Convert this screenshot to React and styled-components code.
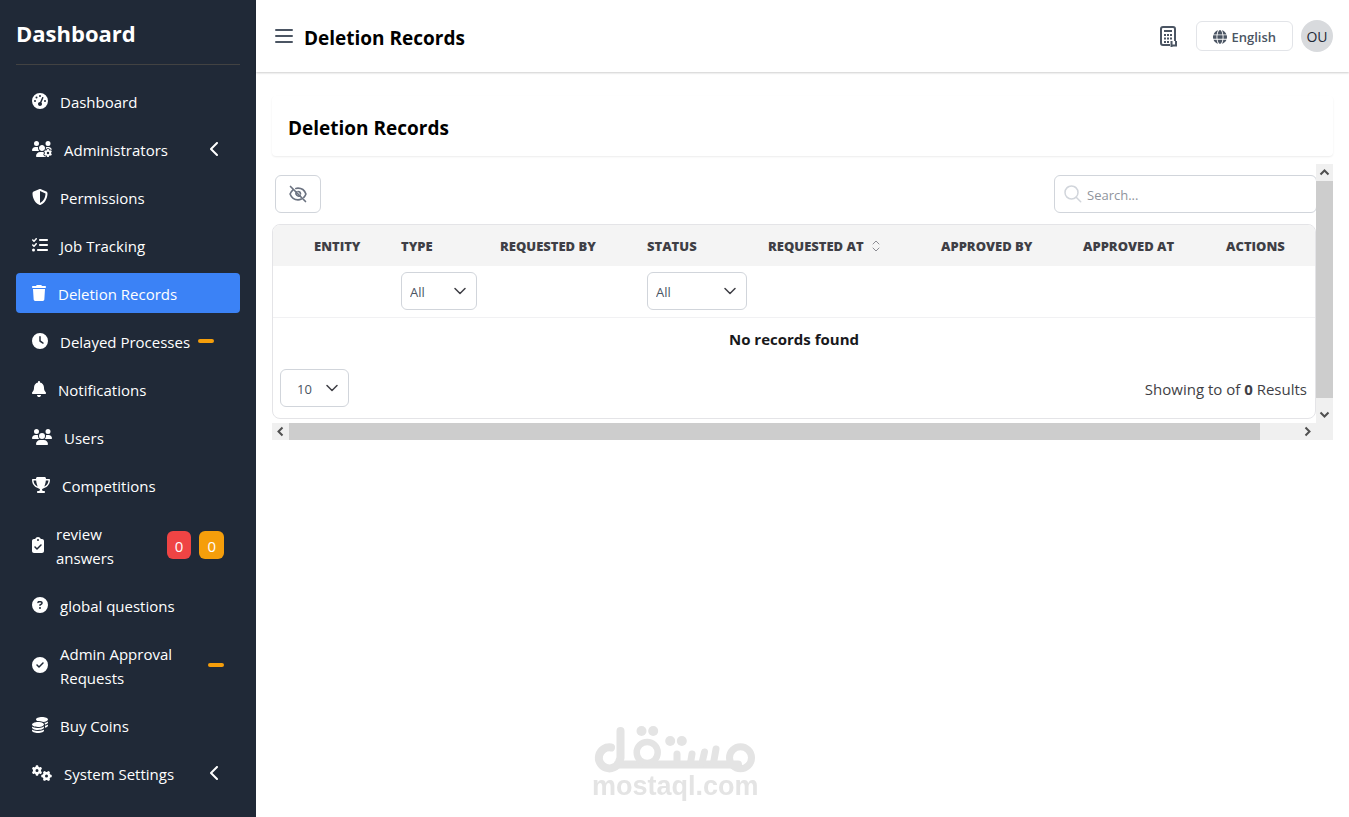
import React from 'react';
import styled, { createGlobalStyle } from 'styled-components';
import {
  FaGaugeHigh, FaUsersGear, FaShieldHalved, FaListCheck, FaTrash, FaClock, FaBell, FaUsers,
  FaTrophy, FaClipboardCheck, FaCircleQuestion, FaCircleCheck, FaCoins, FaGears,
  FaChevronLeft, FaGlobe,
} from 'react-icons/fa6';

const GlobalStyle = createGlobalStyle`
  *, *::before, *::after { box-sizing: border-box; }
  body {
    margin: 0;
    background: #fff;
    color: #1f2937;
    font-family: "Segoe UI", "Open Sans", "Noto Sans", sans-serif;
    font-size: 15px;
    line-height: 24px;
  }
  h1, h2, p { margin: 0; }
  button, select, input { font-family: inherit; }
`;

const Page = styled.div`
  display: flex;
  min-height: 100vh;
`;

const Sidebar = styled.aside`
  flex: 0 0 256px;
  padding: 16px 16px 24px;
  background: #202937;
  color: #fff;
`;

const Brand = styled.h1`
  height: 49px;
  border-bottom: 1px solid #424242;
  font-size: 22px;
  line-height: 34px;
`;

const Menu = styled.ul`
  display: flex;
  flex-direction: column;
  gap: 8px;
  margin: 16px 0 0;
  padding: 0;
  list-style: none;
`;

const MenuLink = styled.a`
  display: flex;
  align-items: center;
  min-height: 40px;
  padding: 7px 16px;
  border-radius: 4px;
  background: ${(p) => (p.$active ? '#3b82f6' : 'transparent')};
  color: #fff;
  text-decoration: none;

  > svg {
    flex: none;
    width: ${(p) => p.$iconWidth}px;
    height: 16px;
  }
`;

const MenuLabel = styled.span`
  margin-left: 12px;
  padding-top: 2px;
  flex: ${(p) => (p.$wrapAt ? '1 1 0' : 'none')};
  max-width: ${(p) => (p.$wrapAt ? `${p.$wrapAt}px` : 'none')};
`;

const Arrow = styled.span`
  display: flex;
  margin: 0 4px 0 auto;
  svg { width: 10px; height: 16px; }
`;

const Badges = styled.span`
  display: flex;
  gap: 8px;
  margin-left: ${(p) => (p.$inline ? '8px' : 'auto')};
`;

const Badge = styled.span`
  min-width: ${(p) => (p.$empty ? '16px' : '24px')};
  padding: ${(p) => (p.$empty ? '2px 8px' : '3px 8px 1px')};
  border-radius: ${(p) => (p.$empty ? '2px' : '6px')};
  background: ${(p) => p.$color};
`;

const Main = styled.main`
  flex: 1;
  min-width: 0;
`;

const TopBar = styled.header`
  display: flex;
  align-items: center;
  height: 72px;
  padding: 0 16px;
  box-shadow: 0 1px 2px rgba(0, 0, 0, 0.2);
`;

const IconButton = styled.button`
  display: flex;
  padding: 0;
  border: 0;
  background: none;
  color: #4b5563;
`;

const Heading = styled.h2`
  color: #000;
  font-size: 19px;
  line-height: 28px;
`;

const TopTitle = styled(Heading)`
  flex: 1;
  margin-left: 8px;
  padding-top: 4px;
`;

const Tools = styled.div`
  display: flex;
  align-items: center;
  gap: 8px;
`;

const LanguageButton = styled.button`
  display: flex;
  align-items: center;
  gap: 4px;
  height: 30px;
  margin-left: 8px;
  padding: 2px 16px 0;
  border: 1px solid #e2e4e8;
  border-radius: 6px;
  background: #fff;
  color: #4b5563;
  font-size: 13px;
  font-weight: 600;
  line-height: 20px;
`;

const Avatar = styled.button`
  width: 32px;
  height: 32px;
  padding: 0;
  border: 0;
  border-radius: 50%;
  background: #d8dadd;
  color: #1f2937;
  font-size: 14px;
`;

const Content = styled.div`
  padding: 24px 16px;
`;

const TitleCard = styled.section`
  padding: 18px 16px 14px;
  border-radius: 4px;
  box-shadow: 0 1px 2px rgba(0, 0, 0, 0.08);
`;

const ScrollFrame = styled.div`
  display: grid;
  grid-template-columns: minmax(0, 1fr) 17px;
  grid-template-rows: auto 17px;
  margin-top: 8px;
  background: #f0f0f0;
`;

const ScrollView = styled.div`
  overflow: hidden;
  padding: 11px 0 4px;
  background: #fff;
`;

const ScrollBar = styled.div`
  display: flex;
  flex-direction: ${(p) => (p.$vertical ? 'column' : 'row')};
  justify-content: space-between;
  background: #f0f0f0;
  color: #505050;
  svg { flex: none; display: block; }
`;

const Thumb = styled.div`
  flex: 0 1 ${(p) => p.$size};
  margin: ${(p) => (p.$vertical ? '0 0 auto' : '0 auto 0 0')};
  background: #cdcdcd;
`;

const ActionRow = styled.div`
  display: flex;
  justify-content: space-between;
  padding-left: 3px;
`;

const ToggleButton = styled.button`
  display: flex;
  align-items: center;
  justify-content: center;
  width: 46px;
  height: 38px;
  border: 1px solid #d1d5db;
  border-radius: 6px;
  background: #fff;
  color: #6b7280;
`;

const SearchBox = styled.label`
  display: flex;
  align-items: center;
  gap: 4px;
  width: 263px;
  height: 38px;
  margin-right: -1px;
  padding: 0 8px;
  border: 1px solid #d1d5db;
  border-radius: 6px;
  color: #d1d5db;
  svg { flex: none; }
`;

const SearchInput = styled.input`
  flex: 1;
  min-width: 0;
  padding: 2px 0 0;
  border: 0;
  outline: 0;
  background: none;
  color: #4b5563;
  font-size: 13px;
  &::placeholder { color: #8f949d; }
`;

const TableCard = styled.section`
  margin-top: 11px;
  overflow: hidden;
  border: 1px solid #e4e4e7;
  border-radius: 8px;
`;

const Table = styled.table`
  width: 100%;
  border-collapse: separate;
  border-spacing: 0;
  table-layout: fixed;
`;

const HeadCell = styled.th`
  height: 41px;
  padding: 0;
  background: #f4f4f4;
  color: #3f3f46;
  font-size: 13px;
  font-weight: 800;
  line-height: 16px;
  text-align: left;
  text-transform: uppercase;
  white-space: nowrap;
  svg { margin-left: 6px; vertical-align: -1px; }
`;

const FilterCell = styled.td`
  height: 52px;
  padding: 6px 0 7px;
  border-bottom: 1px solid #f1f1f3;
  vertical-align: top;
`;

const EmptyCell = styled.td`
  height: 42px;
  padding: 0;
  color: #18181b;
  font-weight: 700;
  text-align: center;
`;

const SelectWrap = styled.span`
  position: relative;
  display: block;
  width: ${(p) => p.$width}px;
  height: 38px;
  svg {
    position: absolute;
    top: 13px;
    right: 11px;
    color: #3f3f46;
    pointer-events: none;
  }
`;

const Select = styled.select`
  appearance: none;
  width: 100%;
  height: 100%;
  padding: 2px 24px 0 ${(p) => p.$pad}px;
  border: 1px solid #d1d5db;
  border-radius: 6px;
  background: #fff;
  color: #4b5563;
  font-size: 13px;
`;

const Footer = styled.footer`
  display: flex;
  align-items: center;
  justify-content: space-between;
  padding: 9px 8px 11px 7px;
  color: #3f3f46;
  p { padding-top: 2px; }
`;

const Watermark = styled.div`
  position: fixed;
  left: 0;
  right: 0;
  bottom: 16px;
  display: flex;
  justify-content: center;
  pointer-events: none;
`;

const items = [
  { label: 'Dashboard', icon: FaGaugeHigh, width: 16 },
  { label: 'Administrators', icon: FaUsersGear, width: 20, arrow: true },
  { label: 'Permissions', icon: FaShieldHalved, width: 16 },
  { label: 'Job Tracking', icon: FaListCheck, width: 16 },
  { label: 'Deletion Records', icon: FaTrash, width: 14, active: true },
  { label: 'Delayed Processes', icon: FaClock, width: 16, badges: [['#f59e0b', '']], inline: true },
  { label: 'Notifications', icon: FaBell, width: 14 },
  { label: 'Users', icon: FaUsers, width: 20 },
  { label: 'Competitions', icon: FaTrophy, width: 18 },
  { label: 'review answers', icon: FaClipboardCheck, width: 12, wrapAt: 96, badges: [['#ef4444', '0'], ['#f59e0b', '0']] },
  { label: 'global questions', icon: FaCircleQuestion, width: 16 },
  { label: 'Admin Approval Requests', icon: FaCircleCheck, width: 16, wrapAt: 140, badges: [['#f59e0b', '']] },
  { label: 'Buy Coins', icon: FaCoins, width: 16 },
  { label: 'System Settings', icon: FaGears, width: 20, arrow: true },
];

const columns = [
  ['', 41], ['Entity', 87], ['Type', 99], ['Requested by', 147], ['Status', 121],
  ['Requested at', 173], ['Approved by', 142], ['Approved at', 143], ['Actions', 89],
];

function Caret({ d }) {
  return (
    <svg width="17" height="17" viewBox="0 0 17 17" fill="none" stroke="currentColor" strokeWidth="2">
      <path d={d} />
    </svg>
  );
}

function Dropdown({ label, value, width, pad }) {
  return (
    <SelectWrap $width={width}>
      <Select aria-label={label} defaultValue={value} $pad={pad}>
        <option>{value}</option>
      </Select>
      <svg width="12" height="12" viewBox="0 0 12 12" fill="none" stroke="currentColor" strokeWidth="1.5" strokeLinecap="round" strokeLinejoin="round">
        <path d="M1 3.500l5 5 5-5" />
      </svg>
    </SelectWrap>
  );
}

function SideMenu() {
  return (
    <Menu>
      {items.map(({ label, icon: Icon, width, active, arrow, badges, inline, wrapAt }) => (
        <li key={label}>
          <MenuLink href="#" $active={active} $iconWidth={width}>
            <Icon />
            <MenuLabel $wrapAt={wrapAt}>{label}</MenuLabel>
            {arrow && <Arrow><FaChevronLeft /></Arrow>}
            {badges && (
              <Badges $inline={inline}>
                {badges.map(([color, text]) => (
                  <Badge key={color} $color={color} $empty={!text}>{text}</Badge>
                ))}
              </Badges>
            )}
          </MenuLink>
        </li>
      ))}
    </Menu>
  );
}

function Logo() {
  return (
    <svg width="166" height="76" viewBox="0 0 166 76" fill="none" stroke="#e4e4e4" strokeLinecap="round" strokeLinejoin="round">
      <path strokeWidth="8" d="M19 22.500A10.500 10.500 0 1 0 27 37L28.500 33V6" />
      <path strokeWidth="8" d="M26 39.500H146" />
      <circle cx="55.200" cy="27.500" r="10.500" strokeWidth="6.500" />
      <circle cx="148.500" cy="32.800" r="11" strokeWidth="7" />
      <path strokeWidth="7" d="M85 29V38M100 29L98.500 38M112.500 27L110 38M124 24L121.500 38" />
      <g fill="#e4e4e4" stroke="none">
        <circle cx="49.500" cy="6" r="5" /><circle cx="61.200" cy="6" r="5" />
        <circle cx="78.200" cy="16" r="5" /><circle cx="89.800" cy="16" r="5" />
        <text x="0" y="70" fontFamily="Liberation Sans, Arial, sans-serif" fontWeight="700" fontSize="27">mostaql.com</text>
      </g>
    </svg>
  );
}

export default function App() {
  return (
    <>
      <GlobalStyle />
      <Page>
        <Sidebar>
          <Brand>Dashboard</Brand>
          <nav><SideMenu /></nav>
        </Sidebar>
        <Main>
          <TopBar>
            <IconButton aria-label="Toggle menu">
              <svg width="24" height="24" viewBox="0 0 24 24" stroke="currentColor" strokeWidth="2" strokeLinecap="round">
                <path d="M4 6h16M4 12h16M4 18h16" />
              </svg>
            </IconButton>
            <TopTitle>Deletion Records</TopTitle>
            <Tools>
              <IconButton aria-label="Calculator">
                <svg width="24" height="24" viewBox="0 0 24 24" fill="none" stroke="currentColor" strokeWidth="2">
                  <path d="M14 21H7a2 2 0 0 1-2-2V5a2 2 0 0 1 2-2h10a2 2 0 0 1 2 2v12" />
                  <path d="M8 7h8" />
                  <path d="M8 11h8M8 14.500h8M8 18h5" strokeDasharray="2 1" />
                  <path d="M15.500 17v6M16 21.500h4V17" />
                </svg>
              </IconButton>
              <LanguageButton><FaGlobe size={14} />English</LanguageButton>
              <Avatar>OU</Avatar>
            </Tools>
          </TopBar>
          <Content>
            <TitleCard><Heading>Deletion Records</Heading></TitleCard>
            <ScrollFrame>
              <ScrollView>
                <ActionRow>
                  <ToggleButton aria-label="Toggle columns">
                    <svg width="20" height="20" viewBox="0 0 24 24" fill="none" stroke="currentColor" strokeWidth="2" strokeLinecap="round" strokeLinejoin="round">
                      <path d="M3 3l18 18" />
                      <path d="M10 9.500a3.300 3.300 0 0 0 4.500 4.500M12 9a3 3 0 0 1 3 3" />
                      <path d="M9.400 5.400A10 10 0 0 1 12 5c5 0 8 3 9.500 7a13 13 0 0 1-2.500 4M16 18a10 10 0 0 1-4 1c-5 0-8-3-9.500-7a12 12 0 0 1 3.500-5" />
                    </svg>
                  </ToggleButton>
                  <SearchBox>
                    <svg width="20" height="20" viewBox="0 0 20 20" fill="none" stroke="currentColor" strokeWidth="1.500" strokeLinecap="round">
                      <circle cx="8.500" cy="8.500" r="6.500" /><path d="M13.200 13.200l4.500 4.500" />
                    </svg>
                    <SearchInput type="text" aria-label="Search" placeholder="Search..." />
                  </SearchBox>
                </ActionRow>
                <TableCard>
                  <Table>
                    <colgroup>
                      {columns.map(([name, width]) => <col key={name} width={width} />)}
                    </colgroup>
                    <thead>
                      <tr>
                        {columns.map(([name]) => (
                          <HeadCell key={name}>
                            {name}
                            {name === 'Requested at' && (
                              <svg width="12" height="12" viewBox="0 0 12 12" fill="none" stroke="#8b8b92" strokeLinecap="round" strokeLinejoin="round">
                                <path d="M3 4l3-3 3 3M3 8l3 3 3-3" />
                              </svg>
                            )}
                          </HeadCell>
                        ))}
                      </tr>
                    </thead>
                    <tbody>
                      <tr>
                        {columns.map(([name]) => (
                          <FilterCell key={name}>
                            {name === 'Type' && <Dropdown label="Type" value="All" width={76} pad={8} />}
                            {name === 'Status' && <Dropdown label="Status" value="All" width={100} pad={8} />}
                          </FilterCell>
                        ))}
                      </tr>
                      <tr><EmptyCell colSpan={columns.length}>No records found</EmptyCell></tr>
                    </tbody>
                  </Table>
                  <Footer>
                    <Dropdown label="Rows per page" value="10" width={69} pad={16} />
                    <p>Showing to of <b>0</b> Results</p>
                  </Footer>
                </TableCard>
              </ScrollView>
              <ScrollBar $vertical>
                <Caret d="M4.500 10.500l4-4 4 4" />
                <Thumb $vertical $size="217px" />
                <Caret d="M4.500 6.500l4 4 4-4" />
              </ScrollBar>
              <ScrollBar>
                <Caret d="M10.500 4.500l-4 4 4 4" />
                <Thumb $size="93%" />
                <Caret d="M6.500 4.500l4 4-4 4" />
              </ScrollBar>
            </ScrollFrame>
          </Content>
        </Main>
      </Page>
      <Watermark><Logo /></Watermark>
    </>
  );
}
